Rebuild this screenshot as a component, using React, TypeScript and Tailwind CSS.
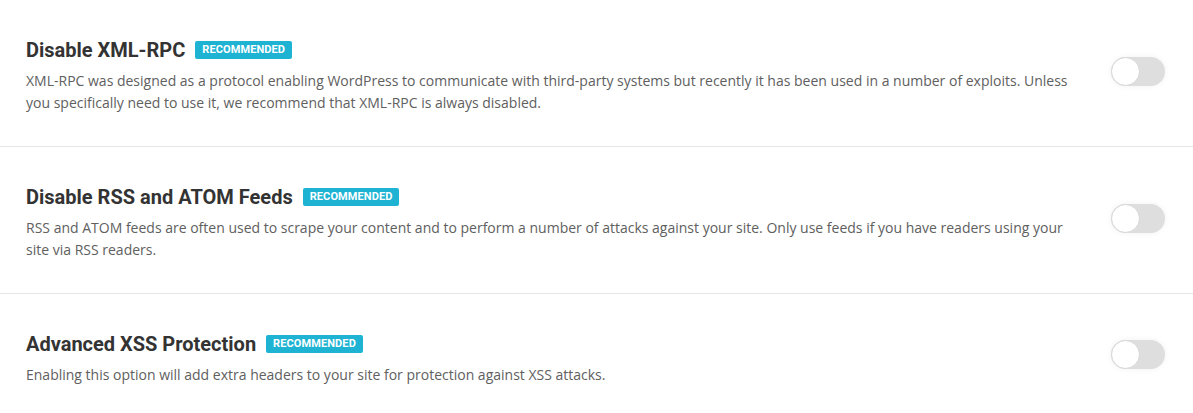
const settings = [
  {
    title: "Disable XML-RPC",
    text: "XML-RPC was designed as a protocol enabling WordPress to communicate with third-party systems but recently it has been used in a number of exploits. Unless you specifically need to use it, we recommend that XML-RPC is always disabled.",
  },
  {
    title: "Disable RSS and ATOM Feeds",
    text: "RSS and ATOM feeds are often used to scrape your content and to perform a number of attacks against your site. Only use feeds if you have readers using your site via RSS readers.",
  },
  {
    title: "Advanced XSS Protection",
    text: "Enabling this option will add extra headers to your site for protection against XSS attacks.",
  },
];

function Toggle() {
  return (
    <button
      type="button"
      className="relative mb-[6px] h-[29px] w-[54px] shrink-0 rounded-full bg-[#dedede] shadow-[0_0_6px_rgba(0,0,0,0.06)]"
    >
      <span className="absolute left-0 top-0 h-[29px] w-[29px] rounded-full border border-[#d6d6d6] bg-white" />
    </button>
  );
}

export default function App() {
  return (
    <div className="min-h-[413px] w-full bg-white">
      {settings.map((s, i) => (
        <div
          key={s.title}
          className={`flex items-center justify-between pl-[26px] pr-[28px] pt-[35px] pb-[32px] ${
            i < settings.length - 1 ? "border-b border-[#e6e6e6]" : ""
          }`}
        >
          <div className="max-w-[1055px]">
            <div className="flex items-center gap-[10px]">
              <h3 className="font-['Roboto',sans-serif] text-[20px] leading-[30px] font-bold text-[#333333]">
                {s.title}
              </h3>
              <span className="rounded-[2px] bg-[#1fb3d3] px-[7px] font-['Roboto',sans-serif] text-[11px] leading-[18px] font-bold uppercase tracking-[0.1px] text-white">
                Recommended
              </span>
            </div>
            <p className="mt-[5px] font-['Open_Sans',sans-serif] text-[14px] leading-[22px] text-[#606060]">
              {s.text}
            </p>
          </div>
          <Toggle />
        </div>
      ))}
    </div>
  );
}
